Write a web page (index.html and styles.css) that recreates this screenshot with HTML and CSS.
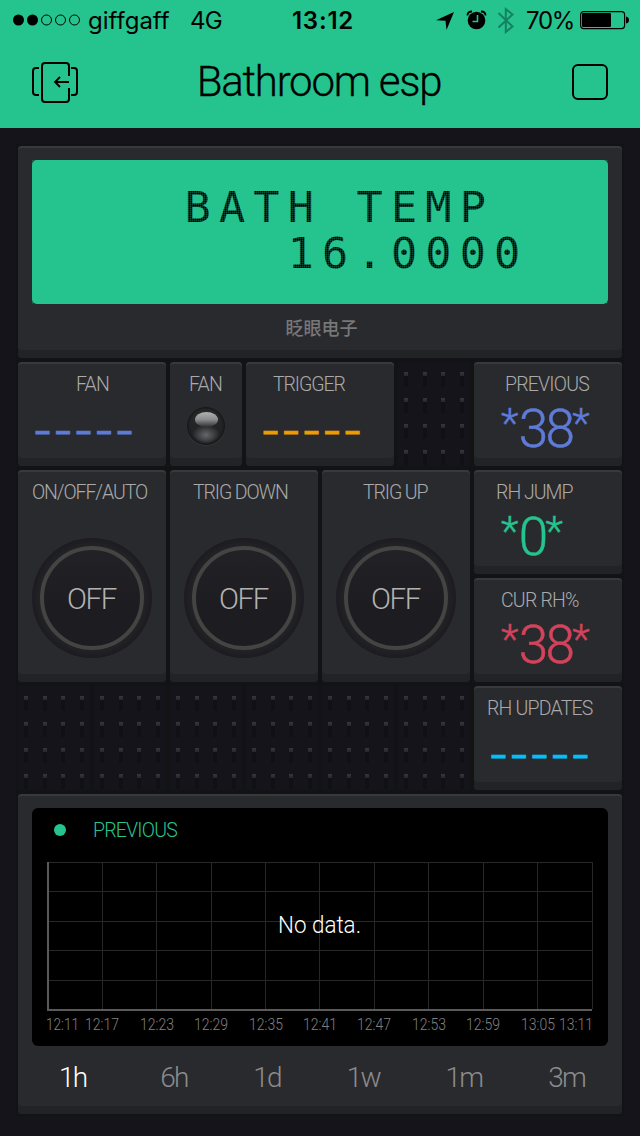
FILE: index.html
```
<!DOCTYPE html>
<html lang="en">
<head>
  <meta charset="UTF-8"/>
  <meta name="viewport" content="width=device-width, initial-scale=1.0"/>
  <title>Bathroom esp</title>
  <link rel="stylesheet" href="styles.css">
</head>
<body>

  <div class="status-bar">
    <div class="status-left">
      <svg class="signal" width="68" height="12" viewBox="0 0 68 12">
        <circle cx="5.5" cy="6" r="5.5"/>
        <circle cx="19.5" cy="6" r="5.5"/>
        <g fill="none" stroke="#000">
          <circle cx="33.5" cy="6" r="5"/>
          <circle cx="47.5" cy="6" r="5"/>
          <circle cx="61.5" cy="6" r="5"/>
        </g>
      </svg>
      <span class="carrier">giffgaff</span>
      <span class="network">4G</span>
    </div>
    <div class="clock">13:12</div>
    <div class="status-right">
      <svg width="80" height="28" viewBox="434 6 80 28">
        <path d="M454 12L436 20.300L445.500 20.700L446.500 30Z"/>
        <circle cx="476.500" cy="20.500" r="8.800"/>
        <path d="M467.500 15.500Q467.500 11.500 472 11.500M485.500 15.500Q485.500 11.500 481 11.500" fill="none" stroke="#000" stroke-width="1.800"/>
        <path d="M477.500 15V21.500H472.500" fill="none" stroke="#25c48f" stroke-width="1.600"/>
        <path class="bluetooth" d="M498.500 13L512.500 26.500L505.800 32V9L512.500 14.500L498.500 27.500"/>
      </svg>
      <span class="percent">70%</span>
      <svg class="battery" width="49" height="20" viewBox="0 0 49 20">
        <rect x="0.600" y="1.600" width="44" height="17" rx="3" fill="none" stroke="#000" stroke-width="1.200"/>
        <rect x="2" y="3" width="29" height="14" rx="1"/>
        <path d="M46 6.500Q49 7 49 10T46 13.500Z"/>
      </svg>
    </div>
  </div>

  <div class="header">
    <svg width="48" height="42" viewBox="0 0 48 42" fill="none" stroke="#000" stroke-width="2">
      <path d="M37 14V4Q37 1 34 1H13Q10 1 10 4V37Q10 40 13 40H34Q37 40 37 37V26"/>
      <path d="M7 6H4Q1 6 1 9V30Q1 33 4 33H7M39 6H42Q45 6 45 9V30Q45 33 42 33H39"/>
      <path d="M37 20H23M28 15L23 20L28 25" stroke-width="1.800"/>
    </svg>
    <h1 class="title">Bathroom esp</h1>
    <div class="stop-btn"></div>
  </div>

  <div class="board">
    <div class="tile lcd-tile">
      <div class="lcd">
        <pre class="lcd-text">    BATH TEMP
       16.0000</pre>
      </div>
      <div class="lcd-name">眨眼电子</div>
    </div>

    <div class="tile wide fan">
      <div class="label">FAN</div>
      <div class="dashes blue">–––––</div>
    </div>
    <div class="tile led-tile">
      <div class="label">FAN</div>
      <div class="led"></div>
    </div>
    <div class="tile wide trigger">
      <div class="label">TRIGGER</div>
      <div class="dashes orange">–––––</div>
    </div>
    <div class="empty"></div>
    <div class="tile wide previous">
      <div class="label">PREVIOUS</div>
      <div class="value blue"><span class="star">*</span>38<span class="star">*</span></div>
    </div>

    <div class="tile wide tall auto">
      <div class="label">ON/OFF/AUTO</div>
      <div class="knob"><div class="ring">OFF</div></div>
    </div>
    <div class="tile wide tall trig-down">
      <div class="label">TRIG DOWN</div>
      <div class="knob"><div class="ring">OFF</div></div>
    </div>
    <div class="tile wide tall trig-up">
      <div class="label">TRIG UP</div>
      <div class="knob"><div class="ring">OFF</div></div>
    </div>
    <div class="tile wide jump">
      <div class="label">RH JUMP</div>
      <div class="value green"><span class="star">*</span>0<span class="star">*</span></div>
    </div>
    <div class="tile wide current">
      <div class="label">CUR RH%</div>
      <div class="value red"><span class="star">*</span>38<span class="star">*</span></div>
    </div>

    <div class="empty"></div>
    <div class="empty"></div>
    <div class="empty"></div>
    <div class="empty"></div>
    <div class="empty"></div>
    <div class="empty"></div>
    <div class="tile wide updates">
      <div class="label">RH UPDATES</div>
      <div class="dashes cyan">–––––</div>
    </div>

    <div class="tile graph-tile">
      <div class="graph">
        <div class="legend"><span class="legend-dot"></span><span class="legend-name">PREVIOUS</span></div>
        <svg class="plot" width="576" height="184" viewBox="0 0 576 184">
          <path class="grid-lines" d="M16 .5H560.500M16 29.500H560M16 59.500H560M16 88.500H560M16 118.500H560M70.500 0V147M124.500 0V147M179.500 0V147M233.500 0V147M287.500 0V147M342.500 0V147M396.500 0V147M451.500 0V147M505.500 0V147M560.500 0V147"/>
          <path class="axis" d="M16 0V148H560"/>
          <g class="times">
            <text x="14" y="168" textLength="33" lengthAdjust="spacingAndGlyphs">12:11</text>
            <text x="53" y="168" textLength="34" lengthAdjust="spacingAndGlyphs">12:17</text>
            <text x="108" y="168" textLength="34" lengthAdjust="spacingAndGlyphs">12:23</text>
            <text x="162" y="168" textLength="34" lengthAdjust="spacingAndGlyphs">12:29</text>
            <text x="217" y="168" textLength="34" lengthAdjust="spacingAndGlyphs">12:35</text>
            <text x="271" y="168" textLength="34" lengthAdjust="spacingAndGlyphs">12:41</text>
            <text x="325" y="168" textLength="34" lengthAdjust="spacingAndGlyphs">12:47</text>
            <text x="380" y="168" textLength="34" lengthAdjust="spacingAndGlyphs">12:53</text>
            <text x="434" y="168" textLength="34" lengthAdjust="spacingAndGlyphs">12:59</text>
            <text x="489" y="168" textLength="34" lengthAdjust="spacingAndGlyphs">13:05</text>
            <text x="527" y="168" textLength="34" lengthAdjust="spacingAndGlyphs">13:11</text>
          </g>
          <text class="no-data" x="246" y="71" textLength="83" lengthAdjust="spacingAndGlyphs">No data.</text>
        </svg>
      </div>
      <div class="ranges">
        <span class="active">1h</span>
        <span>6h</span>
        <span>1d</span>
        <span>1w</span>
        <span>1m</span>
        <span>3m</span>
      </div>
    </div>
  </div>

</body>
</html>
```
FILE: styles.css
```
:root {
  --green: #25c48f;
  --bg: #15141a;
  --tile: #292a2e;
  --tile-edge: #222326;
  --text: #aaaaaa;
}

* {
  margin: 0;
  padding: 0;
  box-sizing: border-box;
}

body {
  width: 640px;
  height: 1136px;
  background: var(--bg);
  font-family: Roboto, sans-serif;
  font-weight: 300;
  overflow: hidden;
}

.status-bar {
  height: 40px;
  padding: 0 11px 0 13px;
  background: var(--green);
  display: grid;
  grid-template-columns: 1fr auto 1fr;
  align-items: center;
  font-family: Inter, sans-serif;
  font-size: 24px;
  font-weight: 400;
}

.status-left,
.status-right {
  display: flex;
  align-items: center;
}

.status-right {
  justify-content: flex-end;
}

.carrier {
  margin-left: 7px;
  width: 102px;
}

.network {
  letter-spacing: -0.8px;
}

.clock {
  font-weight: 600;
  letter-spacing: 0.8px;
  padding-left: 4px;
}

.percent {
  margin: 0 6px 0 12px;
  letter-spacing: -1.3px;
}

.bluetooth {
  fill: none;
  stroke: #16805f;
  stroke-width: 2;
}

.header {
  height: 88px;
  padding: 0 32px;
  background: var(--green);
  display: flex;
  justify-content: space-between;
  align-items: center;
}

.header svg {
  margin-bottom: 3px;
}

.stop-btn {
  width: 36px;
  height: 36px;
  margin-bottom: 5px;
  border: 2px solid #000;
  border-radius: 6px;
}

.title {
  font-size: 42px;
  font-weight: 300;
  line-height: 50px;
  letter-spacing: -1.25px;
  margin: 0 14px 4px 0;
  -webkit-text-stroke: 0.3px;
}

/* widget board, 8 columns */
.board {
  margin: 18px 18px 0;
  display: grid;
  grid-template-columns: repeat(8, 72px);
  grid-auto-rows: 104px;
  gap: 4px;
  background: #121315;
  box-shadow: 0 0 0 2px #121315;
}

.tile {
  background: var(--tile);
  border-radius: 4px;
  box-shadow: inset 0 2px #38393c, inset 0 -8px var(--tile-edge);
  padding-top: 13px;
  overflow: hidden;
}

.wide {
  grid-column: span 2;
}

.tall {
  grid-row: span 2;
}

.lcd-tile {
  grid-column: span 8;
  grid-row: span 2;
  padding: 14px 14px 0;
}

.lcd {
  position: relative;
  height: 144px;
  padding-top: 24px;
  background: var(--green);
  border-radius: 5px;
}

/* dot matrix mask */
.lcd::after {
  content: '';
  position: absolute;
  inset: 0;
  background:
    repeating-linear-gradient(to right, rgba(37, 196, 143, 0.2) 0 1px, transparent 1px 2px),
    repeating-linear-gradient(to bottom, rgba(37, 196, 143, 0.2) 0 1px, transparent 1px 2px);
}

.lcd-text {
  font-family: "DejaVu Sans Mono", monospace;
  font-size: 43.5px;
  font-weight: 400;
  line-height: 46px;
  letter-spacing: 8.2px;
  padding-left: 15px;
  color: #000;
}

.lcd-name {
  margin-top: 11px;
  padding-left: 3px;
  text-align: center;
  font-family: "Noto Sans CJK SC", sans-serif;
  font-size: 18px;
  line-height: 24px;
  font-weight: 500;
  color: #777;
}

.label {
  font-size: 19.5px;
  line-height: 20px;
  letter-spacing: -0.8px;
  color: var(--text);
  white-space: nowrap;
}

.fan .label { padding-left: 58px; }
.led-tile .label { padding-left: 19px; }
.trigger .label { padding-left: 27px; letter-spacing: -1.1px; }
.previous .label { padding-left: 31px; }
.auto .label { padding-left: 14px; letter-spacing: -1.1px; }
.trig-down .label { padding-left: 23px; letter-spacing: -1.1px; }
.trig-up .label { padding-left: 41px; letter-spacing: -1.1px; }
.jump .label { padding-left: 22px; letter-spacing: -1px; }
.current .label { padding-left: 27px; }
.updates .label { padding-left: 13px; }

.dashes {
  margin-top: 21px;
  padding-left: 17px;
  font-family: "Liberation Sans", sans-serif;
  font-size: 27px;
  font-weight: 700;
  line-height: 30px;
  letter-spacing: 5.5px;
  -webkit-text-stroke: 0.8px;
}

.value {
  margin-top: 7px;
  padding-left: 27px;
  font-size: 53px;
  line-height: 54px;
  letter-spacing: -2.6px;
  -webkit-text-stroke: 0.5px;
  white-space: nowrap;
}

.star {
  font-size: 41px;
  letter-spacing: 0.3px;
  vertical-align: 10px;
  line-height: 1px;
}

.blue { color: #5f7bd8; }
.orange { color: #ed9d00; }
.cyan { color: #04c0f8; }
.green { color: var(--green); }
.red { color: #d3435c; }

.led {
  width: 38px;
  height: 38px;
  margin: 12px 0 0 17px;
  padding-top: 4px;
  border-radius: 50%;
  border: 1px solid #161719;
  background:
    radial-gradient(ellipse 14px 10px at 50% 27px, #66676a, transparent),
    linear-gradient(#28292b, #1f2022);
  box-shadow: inset 0 0 2px 1px #1c1d1f, 0 1px #36373a;
}

.led::before {
  content: '';
  display: block;
  width: 23px;
  height: 15px;
  margin: 0 auto;
  border-radius: 50%;
  background: linear-gradient(#b0b0b1, #8c8c8e 50%, #2e2f31);
}

.knob {
  width: 120px;
  height: 120px;
  margin: 35px 0 0 14px;
  padding: 8px;
  border-radius: 50%;
  background: radial-gradient(circle, #222125 53px, #1c1b1f 60px);
}

.ring {
  height: 104px;
  border: 4px solid #444443;
  border-radius: 50%;
  background: linear-gradient(#222125, #1d1c20 60%);
  color: #b2b2b2;
  font-size: 29.5px;
  line-height: 98px;
  letter-spacing: -1.4px;
  text-indent: -1px;
  text-align: center;
}

/* free cell with peg holes */
.empty {
  --pegs: linear-gradient(#38383b, #27272a 4px, #111014 4px, #111014 15px, transparent 15px);
  background: var(--pegs) 6px 10px, var(--pegs) 25px 10px, var(--pegs) 43px 10px, var(--pegs) 62px 10px;
  background-size: 4px 26px;
  background-repeat: repeat-y;
  background-color: var(--bg);
}

.graph-tile {
  grid-column: span 8;
  grid-row: span 3;
  padding: 14px 14px 0;
}

.graph {
  height: 238px;
  background: #000;
  border-radius: 6px;
  overflow: hidden;
}

.legend {
  height: 54px;
  padding: 0 0 10px 22px;
  display: flex;
  align-items: center;
  gap: 27px;
  color: var(--green);
  font-size: 19.5px;
  letter-spacing: -0.8px;
}

.legend-dot {
  width: 12px;
  height: 12px;
  border-radius: 50%;
  background: var(--green);
}

.plot {
  display: block;
}

.grid-lines {
  fill: none;
  stroke: #282828;
}

.axis {
  fill: none;
  stroke: #5a5a5a;
  stroke-width: 2;
}

.times {
  fill: #808080;
  font-size: 16px;
}

.no-data {
  fill: #fff;
  font-size: 23.5px;
}

.ranges {
  display: flex;
  justify-content: space-between;
  padding: 14px 23px 0 27px;
  font-size: 28px;
  line-height: 36px;
  letter-spacing: -1.8px;
  color: #8c8c8c;
}

.ranges .active {
  color: #fff;
  margin-right: 8px;
}
```
